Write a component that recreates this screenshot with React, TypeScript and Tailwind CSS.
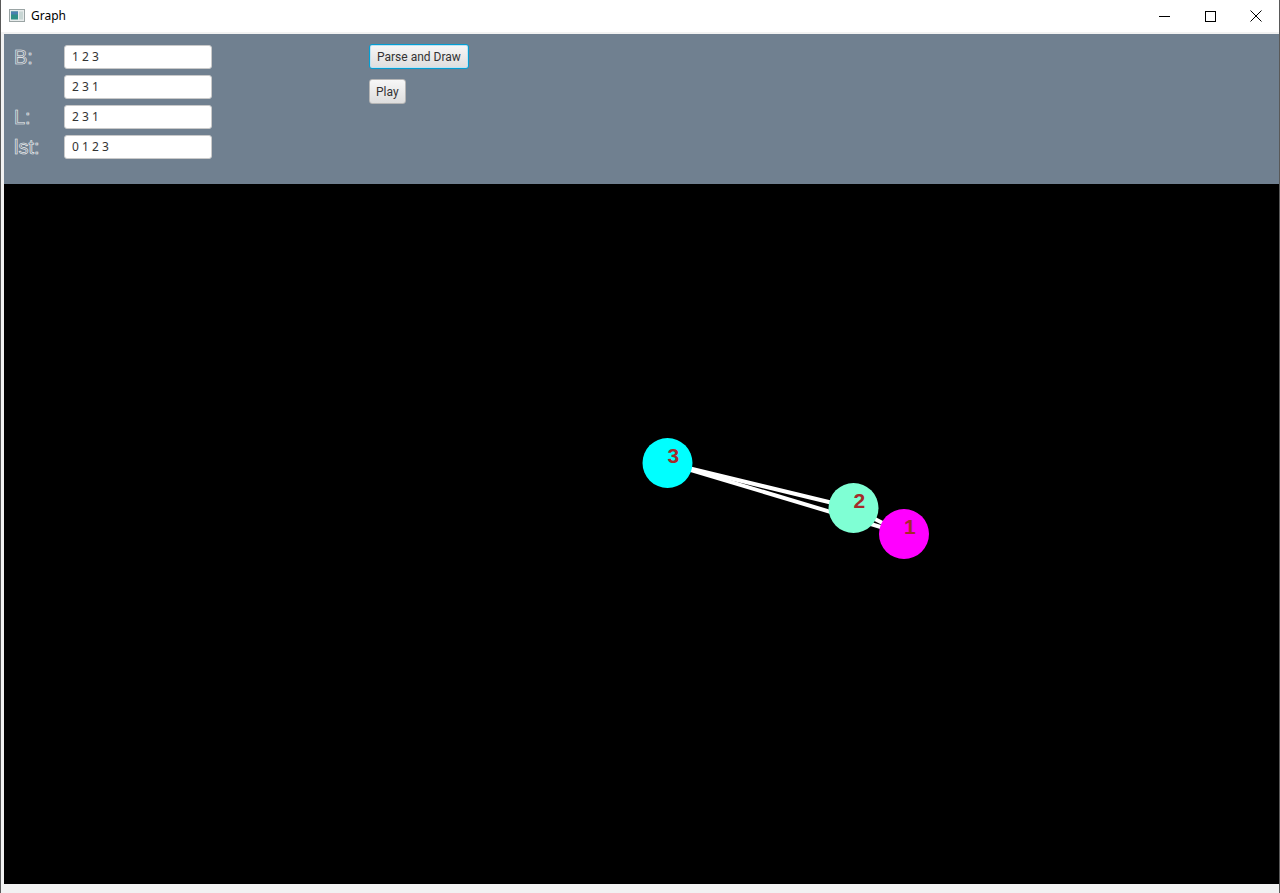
const ROWS = [
  { label: "B:", value: "1 2 3" },
  { label: "", value: "2 3 1" },
  { label: "L:", value: "2 3 1" },
  { label: "lst:", value: "0 1 2 3" },
];

// node centres are in canvas coordinates (canvas origin = 4,184 on screen)
const NODES = [
  { id: "3", x: 663.5, y: 279, fill: "#00ffff" },
  { id: "2", x: 849.5, y: 324, fill: "#7fffd4" },
  { id: "1", x: 900, y: 350, fill: "#ff00ff" },
];

const EDGES: [string, string][] = [
  ["3", "2"],
  ["3", "1"],
  ["2", "1"],
];

function TitleBar() {
  return (
    <div className="flex h-[32px] shrink-0 items-center bg-white">
      <svg width="16" height="14" viewBox="0 0 16 14" className="ml-[8px]">
        <rect x="0.5" y="0.5" width="15" height="12" fill="#e8ecec" stroke="#9aa4a4" />
        <rect x="2" y="2.5" width="7" height="8" fill="#2f8f86" />
        <rect x="2" y="2.5" width="7" height="3" fill="#4a7fb0" />
        <rect x="10" y="2.5" width="4" height="8" fill="#c8d6d4" />
      </svg>
      <span className="ml-[6px] text-[12px] text-black [font-family:'Noto_Sans',sans-serif]">
        Graph
      </span>
      <div className="ml-auto flex h-full">
        <div className="flex w-[46px] items-center justify-center">
          <svg width="11" height="11" viewBox="0 0 11 11">
            <line x1="0" y1="5.5" x2="11" y2="5.5" stroke="#000" strokeWidth="1" />
          </svg>
        </div>
        <div className="flex w-[46px] items-center justify-center">
          <svg width="11" height="11" viewBox="0 0 11 11">
            <rect x="0.5" y="0.5" width="10" height="10" fill="none" stroke="#000" strokeWidth="1" />
          </svg>
        </div>
        <div className="flex w-[46px] items-center justify-center">
          <svg width="12" height="12" viewBox="0 0 12 12">
            <path d="M0.5 0.5 L11.5 11.5 M11.5 0.5 L0.5 11.5" stroke="#000" strokeWidth="1" />
          </svg>
        </div>
      </div>
    </div>
  );
}

function FxButton({ children, focused }: { children: string; focused?: boolean }) {
  return (
    <button
      className={
        focused
          ? "h-[25px] rounded-[3px] border border-[#039ed3] bg-gradient-to-b from-[#f7f7f7] to-[#dedede] px-[7px] text-[12px] text-[#333] shadow-[inset_0_0_0_1px_#bfe3f2] [font-family:Roboto,sans-serif]"
          : "h-[25px] rounded-[3px] border border-[#b5b5b5] bg-gradient-to-b from-[#f7f7f7] to-[#dedede] px-[6px] text-[12px] text-[#333] [font-family:Roboto,sans-serif]"
      }
    >
      {children}
    </button>
  );
}

function ControlPanel() {
  return (
    <div className="flex h-[150px] shrink-0 bg-[#708090] pl-[10px]">
      <div className="grid grid-cols-[50px_148px] content-start gap-y-[6px] pt-[11px]">
        {ROWS.map((r, i) => (
          <div key={i} className="contents">
            <span className="flex h-[24px] items-center text-[20px] leading-none text-transparent [-webkit-text-stroke:0.6px_#f4f4f4] [font-family:'Liberation_Sans',sans-serif]">
              {r.label}
            </span>
            <div className="flex h-[24px] items-center rounded-[3px] border border-[#c9c9c9] bg-white pl-[7px] text-[12px] text-[#333] [font-family:'Noto_Sans',sans-serif]">
              {r.value}
            </div>
          </div>
        ))}
      </div>
      <div className="ml-[157px] flex flex-col items-start gap-[10px] pt-[10px]">
        <FxButton focused>Parse and Draw</FxButton>
        <FxButton>Play</FxButton>
      </div>
    </div>
  );
}

function GraphCanvas() {
  const byId = Object.fromEntries(NODES.map((n) => [n.id, n]));
  return (
    <div className="relative flex-1 bg-black">
      <svg width="1275" height="700" className="block">
        {EDGES.map(([a, b]) => (
          <line
            key={a + b}
            x1={byId[a].x}
            y1={byId[a].y}
            x2={byId[b].x}
            y2={byId[b].y}
            stroke="#fff"
            strokeWidth="4"
          />
        ))}
        {NODES.map((n) => (
          <g key={n.id}>
            <circle cx={n.x} cy={n.y} r="25" fill={n.fill} />
            <text
              x={n.x}
              y={n.y}
              fill="#a52a2a"
              fontSize="21"
              fontWeight="bold"
              fontFamily="'Liberation Sans', Arial, sans-serif"
            >
              {n.id}
            </text>
          </g>
        ))}
      </svg>
    </div>
  );
}

export default function App() {
  return (
    <div className="flex h-[893px] w-[1280px] flex-col overflow-hidden border-x border-[#595959] bg-white">
      <TitleBar />
      <div className="flex flex-1 flex-col bg-[#f2f2f2] pb-[9px] pl-[3px] pt-[2px]">
        <ControlPanel />
        <GraphCanvas />
      </div>
    </div>
  );
}
